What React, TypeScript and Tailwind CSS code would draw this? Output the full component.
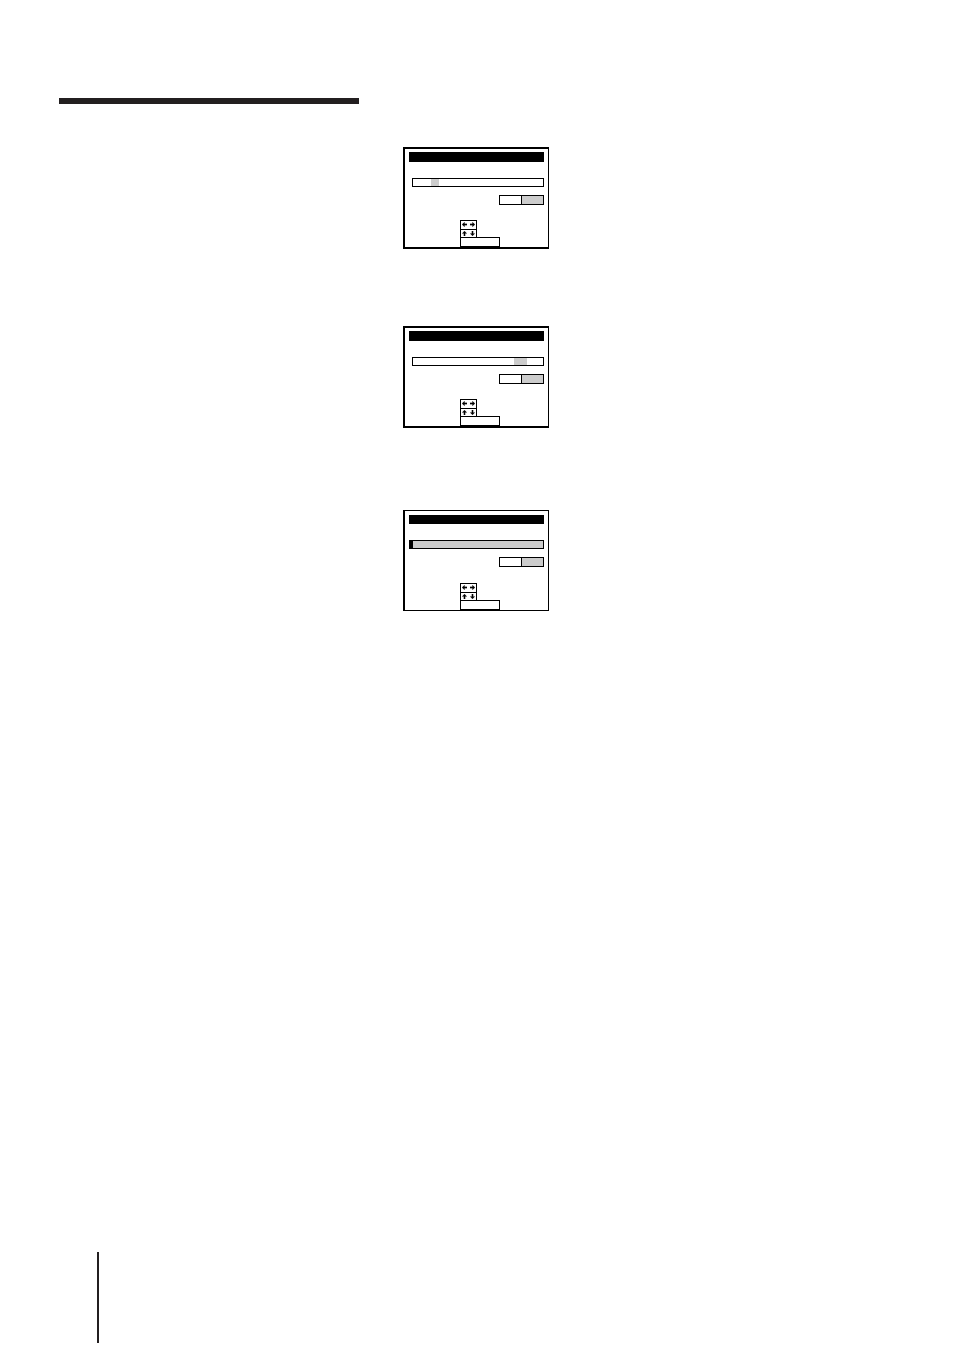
type ScreenProps = {
  start: number;
  size: number;
  filled?: boolean;
};

const rotations = {
  left: 'rotate-0',
  up: 'rotate-90',
  right: 'rotate-180',
  down: '-rotate-90',
};

const Arrow = ({ to }: { to: keyof typeof rotations }) => (
  <svg viewBox="0 0 5 5" className={`block size-[5px] ${rotations[to]}`} aria-hidden="true">
    <path d="M0 2.5 L2.6 0.1 V1.8 H5 V3.2 H2.6 V4.9 Z" fill="#000" stroke="#000" strokeWidth="0.15" />
  </svg>
);

const Keys = () => (
  <div className="mt-auto ml-[51px] flex w-10 flex-col">
    <div className="flex h-[9px] w-[17px] items-start justify-between border-x border-t border-black px-px pt-px">
      <Arrow to="left" />
      <Arrow to="right" />
    </div>
    <div className="flex h-2 w-[17px] items-start justify-between border-x border-t border-black px-px pt-px">
      <Arrow to="up" />
      <Arrow to="down" />
    </div>
    <div className="h-2.5 border border-black"></div>
  </div>
);

const Screen = ({ start, size, filled = false }: ScreenProps) => (
  <figure
    className={
      filled
        ? 'flex h-[101px] w-[146px] flex-col border border-l-2 border-black px-1 pt-1'
        : 'flex h-[102px] w-[146px] flex-col border-2 border-r border-black px-1 pt-[3px]'
    }
  >
    <div className={filled ? 'h-[9px] bg-black' : 'h-2.5 bg-black'}></div>
    {filled ? (
      <div className="mt-4 h-[9px] border border-l-4 border-black bg-[#cccccc]"></div>
    ) : (
      <div className="mt-4 ml-[3px] h-[9px] border border-black">
        <div className="h-full bg-[#cccccc]" style={{ marginLeft: start, width: size }}></div>
      </div>
    )}
    <div className="mt-2 flex h-2.5 w-[45px] self-end border border-black">
      <div className="flex-1"></div>
      <div className="w-[22px] border-l border-black bg-[#cccccc]"></div>
    </div>
    <Keys />
  </figure>
);

export default function App() {
  return (
    <main className="flex min-h-screen flex-col bg-white pt-[98px] pb-2 pl-[59px]">
      <div className="h-1.5 w-[300px] bg-[#231f20]"></div>
      <section className="mt-[43px] ml-[344px] flex flex-col">
        <Screen start={18} size={8} />
        <div className="mt-[77px]">
          <Screen start={101} size={13} />
        </div>
        <div className="mt-[82px]">
          <Screen start={0} size={0} filled />
        </div>
      </section>
      <footer className="mt-auto ml-[38px] h-[91px] border-l-2 border-[#231f20]"></footer>
    </main>
  );
}
